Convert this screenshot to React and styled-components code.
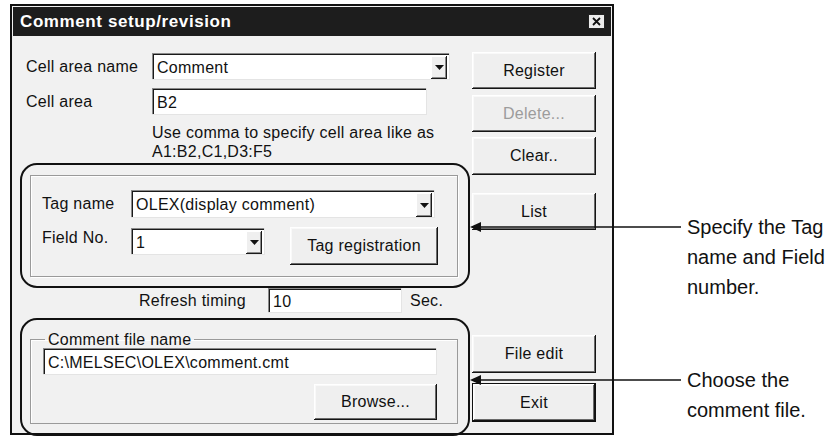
import React from 'react';
import styled, { createGlobalStyle } from 'styled-components';

const Global = createGlobalStyle`
  html, body { margin: 0; padding: 0; background: #ffffff; }
  body { font-family: "Liberation Sans", Arial, sans-serif; }
  * { box-sizing: border-box; }
`;

const Page = styled.div`
  position: relative;
  width: 838px;
  height: 437px;
  overflow: hidden;
  padding: 4px 0 0 10px;
`;

const Dialog = styled.div`
  width: 604px;
  height: 431px;
  border: 2px solid #111;
  padding: 1px 1px 0;
  background: #f1f1f1;
  display: flex;
  flex-direction: column;
  font-size: 16px;
  letter-spacing: 0.27px;
  color: #111;
`;

const TitleBar = styled.div`
  height: 29px;
  flex: none;
  background: #1d1d1d;
  color: #fff;
  display: flex;
  align-items: center;
  justify-content: space-between;
  padding: 0 6px 0 7px;
`;

const Title = styled.span`
  font-weight: bold;
  font-size: 17px;
  letter-spacing: 0.6px;
`;

const CloseBox = styled.span`
  width: 17px;
  height: 15px;
  background: #ececec;
  border: 1px solid #222;
  display: flex;
  align-items: center;
  justify-content: center;
`;

const Body = styled.div`
  flex: 1;
  display: grid;
  grid-template-columns: 453px 124px;
  column-gap: 6px;
  align-items: start;
`;

const LeftCol = styled.div`
  display: flex;
  flex-direction: column;
`;

const RightCol = styled.div`
  display: flex;
  flex-direction: column;
`;

const Row = styled.div`
  display: flex;
  align-items: ${p => p.$align || 'center'};
  margin-top: ${p => p.$mt || 0}px;
  padding-left: ${p => p.$pl || 0}px;
`;

const Label = styled.span`
  width: ${p => p.$w}px;
  flex: none;
  line-height: ${p => p.$lh || 'normal'};
`;

const Sunken = styled.div`
  width: ${p => p.$w ? `${p.$w}px` : '100%'};
  height: ${p => p.$h}px;
  flex: none;
  background: #fff;
  box-shadow: inset 1px 1px #8a8a8a, inset 2px 2px #1a1a1a;
  border-right: 1px solid #e4e4e4;
  border-bottom: 1px solid #e4e4e4;
  display: flex;
  align-items: center;
  padding: 2px 2px 0 5px;
  white-space: nowrap;
`;

const FieldText = styled.span`
  flex: 1;
  padding-top: 1px;
`;

const DropBtn = styled.span`
  width: 16px;
  height: ${p => p.$h}px;
  align-self: center;
  margin-top: 1px;
  background: #efefef;
  box-shadow: inset -1px -1px #1a1a1a, inset 1px 1px #ffffff, inset -2px -2px #8a8a8a;
  display: flex;
  align-items: center;
  justify-content: center;
  flex: none;
`;

const Hint = styled.div`
  margin-top: 8px;
  margin-left: 139px;
  line-height: 19px;
`;

const TagGroup = styled.div`
  margin-top: 14px;
  margin-left: 17px;
  width: 428px;
  height: 102px;
  border: 1px solid #9a9a9a;
  box-shadow: inset 1px 1px #ffffff, 1px 1px #ffffff;
  padding: 14px 0 0 11px;
`;

const Button = styled.button`
  display: block;
  width: ${p => p.$w ? `${p.$w}px` : '100%'};
  height: ${p => p.$h}px;
  margin-top: ${p => p.$mt || 0}px;
  margin-left: ${p => p.$ml || 0}px;
  align-self: ${p => p.$self || 'auto'};
  flex: none;
  font-family: "Liberation Sans", Arial, sans-serif;
  font-size: 16px;
  letter-spacing: 0.27px;
  color: ${p => p.disabled ? '#9c9c9c' : '#111'};
  background: #efefef;
  border: ${p => p.$default ? '1px solid #111' : 'none'};
  box-shadow: inset -1px -1px #141414, inset 1px 1px #ffffff, inset -2px -2px #6a6a6a, inset 2px 2px #f9f9f9;
  padding: 0;
  cursor: default;
`;

const SecText = styled.span`
  margin-left: 8px;
`;

const FileGroup = styled.fieldset`
  margin: 18px 0 0 17px;
  width: 428px;
  border: 1px solid #9a9a9a;
  box-shadow: inset 1px 1px #ffffff;
  padding: 0 20px 3px 12px;
  display: flex;
  flex-direction: column;
  min-width: 0;
`;

const Legend = styled.legend`
  padding: 0 3px;
  margin-left: 2px;
  line-height: 17px;
`;

const Ring = styled.div`
  position: absolute;
  left: ${p => p.$x}px;
  top: ${p => p.$y}px;
  width: ${p => p.$w}px;
  height: ${p => p.$h}px;
  border: 2px solid #111;
  border-radius: 17px;
  pointer-events: none;
`;

const Callout = styled.div`
  position: absolute;
  left: 469px;
  top: ${p => p.$y}px;
  display: flex;
  align-items: flex-start;
`;

const CalloutText = styled.div`
  margin-left: 6px;
  font-family: "Liberation Sans", Arial, sans-serif;
  font-size: 20px;
  line-height: 30px;
  color: #111;
`;

function Arrow() {
  return (
    <svg width="212" height="30" viewBox="0 0 212 30">
      <line x1="8" y1="15" x2="212" y2="15" stroke="#111" strokeWidth="1.6" />
      <polygon points="1,15 12,10 12,20" fill="#111" />
    </svg>
  );
}

function Caret() {
  return (
    <svg width="9" height="5" viewBox="0 0 9 5">
      <polygon points="0,0 9,0 4.5,5" fill="#111" />
    </svg>
  );
}

function Combo({ w, h, children }) {
  return (
    <Sunken $w={w} $h={h}>
      <FieldText>{children}</FieldText>
      <DropBtn $h={h - 4}><Caret /></DropBtn>
    </Sunken>
  );
}

export default function App() {
  return (
    <>
      <Global />
      <Page>
        <Dialog>
          <TitleBar>
            <Title>Comment setup/revision</Title>
            <CloseBox>
              <svg width="9" height="9" viewBox="0 0 9 9">
                <path d="M1 1 L8 8 M8 1 L1 8" stroke="#111" strokeWidth="1.8" />
              </svg>
            </CloseBox>
          </TitleBar>
          <Body>
            <LeftCol>
              <Row $mt={17} $pl={13}>
                <Label $w={126}>Cell area name</Label>
                <Combo w={298} h={27}>Comment</Combo>
              </Row>
              <Row $mt={8} $pl={13}>
                <Label $w={126}>Cell area</Label>
                <Sunken $w={275} $h={27}><FieldText>B2</FieldText></Sunken>
              </Row>
              <Hint>
                Use comma to specify cell area like as<br />
                A1:B2,C1,D3:F5
              </Hint>
              <TagGroup>
                <Row>
                  <Label $w={89}>Tag name</Label>
                  <Combo w={304} h={28}>OLEX(display comment)</Combo>
                </Row>
                <Row $mt={10} $align="flex-start">
                  <Label $w={89} $lh="20px">Field No.</Label>
                  <Combo w={134} h={27}>1</Combo>
                  <Button $w={148} $h={38} $ml={25} $mt={-1}>Tag registration</Button>
                </Row>
              </TagGroup>
              <Row $mt={11} $pl={126}>
                <Label $w={129}>Refresh timing</Label>
                <Sunken $w={134} $h={25}><FieldText>10</FieldText></Sunken>
                <SecText>Sec.</SecText>
              </Row>
              <FileGroup>
                <Legend>Comment file name</Legend>
                <Sunken $h={27}><FieldText>C:\MELSEC\OLEX\comment.cmt</FieldText></Sunken>
                <Button $w={123} $h={36} $mt={9} $self="flex-end">Browse...</Button>
              </FileGroup>
            </LeftCol>
            <RightCol>
              <Button $h={37} $mt={16}>Register</Button>
              <Button $h={37} $mt={6} disabled>Delete...</Button>
              <Button $h={38} $mt={5}>Clear..</Button>
              <Button $h={37} $mt={18}>List</Button>
              <Button $h={38} $mt={105}>File edit</Button>
              <Button $h={39} $mt={10} $default>Exit</Button>
            </RightCol>
          </Body>
        </Dialog>
        <Ring $x={20} $y={163} $w={450} $h={125} />
        <Ring $x={20} $y={318} $w={450} $h={118} />
        <Callout $y={212}>
          <Arrow />
          <CalloutText>
            Specify the Tag<br />
            name and Field<br />
            number.
          </CalloutText>
        </Callout>
        <Callout $y={365}>
          <Arrow />
          <CalloutText>
            Choose the<br />
            comment file.
          </CalloutText>
        </Callout>
      </Page>
    </>
  );
}
